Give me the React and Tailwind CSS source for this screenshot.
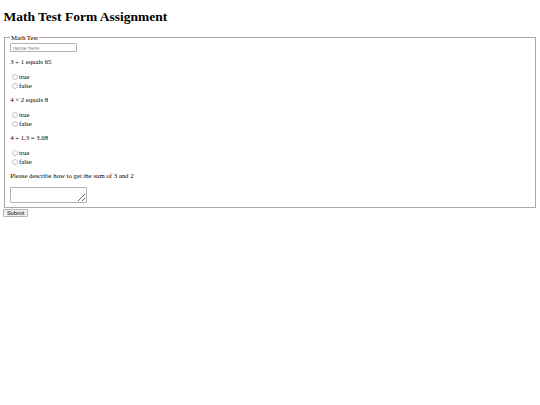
function Radio({ name }) {
  return (
    <input
      type="radio"
      name={name}
      className="appearance-none w-[5.5px] h-[5.5px] m-0 ml-[2px] mr-[1.3px] rounded-full border border-[#c4c4c4] bg-white checked:bg-[#1a73e8]"
    />
  );
}

function Question({ text, name }) {
  return (
    <div>
      <p className="mt-[6px] leading-[8px]">{text}</p>
      <div className="mt-[6.5px] mb-[-0.5px] flex flex-col">
        <label className="flex items-center h-[9px]">
          <Radio name={name} />
          true
        </label>
        <label className="flex items-center h-[9px]">
          <Radio name={name} />
          false
        </label>
      </div>
    </div>
  );
}

export default function App() {
  return (
    <div className="bg-white min-h-[405px] px-[3.4px] pt-[9px] text-black text-[6.75px] leading-[8px] font-['Liberation_Serif',serif]">
      <h1 className="text-[13.5px] leading-[15.5px] font-bold">Math Test Form Assignment</h1>

      <form className="mt-[9px]">
        <fieldset className="mx-[0.8px] border border-[#a9a9a9] px-[5px] pb-[4.2px] pt-[1.5px]">
          <legend className="px-[0.85px] leading-[8px]">Math Test</legend>
          <input
            type="text"
            placeholder="name here"
            className="block w-[67px] h-[9px] border border-[#b3b3b3] rounded-[1px] px-[1.5px] text-[5.6px] font-['Liberation_Sans',sans-serif] placeholder:text-[#8a8a8a]"
          />

          <Question text="3 ÷ 1 equals 65" name="q1" />
          <Question text="4 × 2 equals 8" name="q2" />
          <Question text="4 ÷ 1.3 = 3.08" name="q3" />

          <p className="mt-[6px] leading-[8px]">Please describe how to get the sum of 3 and 2</p>
          <textarea className="block mt-[7px] w-[77px] h-[16px] border border-[#b3b3b3] rounded-[1px] resize-y"></textarea>
        </fieldset>
        <button
          type="submit"
          className="block mt-[1px] h-[8px] px-[2.5px] border border-[#b3b3b3] rounded-[1px] bg-[#efefef] text-[5.6px] leading-[6px] font-['Liberation_Sans',sans-serif]"
        >
          Submit
        </button>
      </form>
    </div>
  );
}
